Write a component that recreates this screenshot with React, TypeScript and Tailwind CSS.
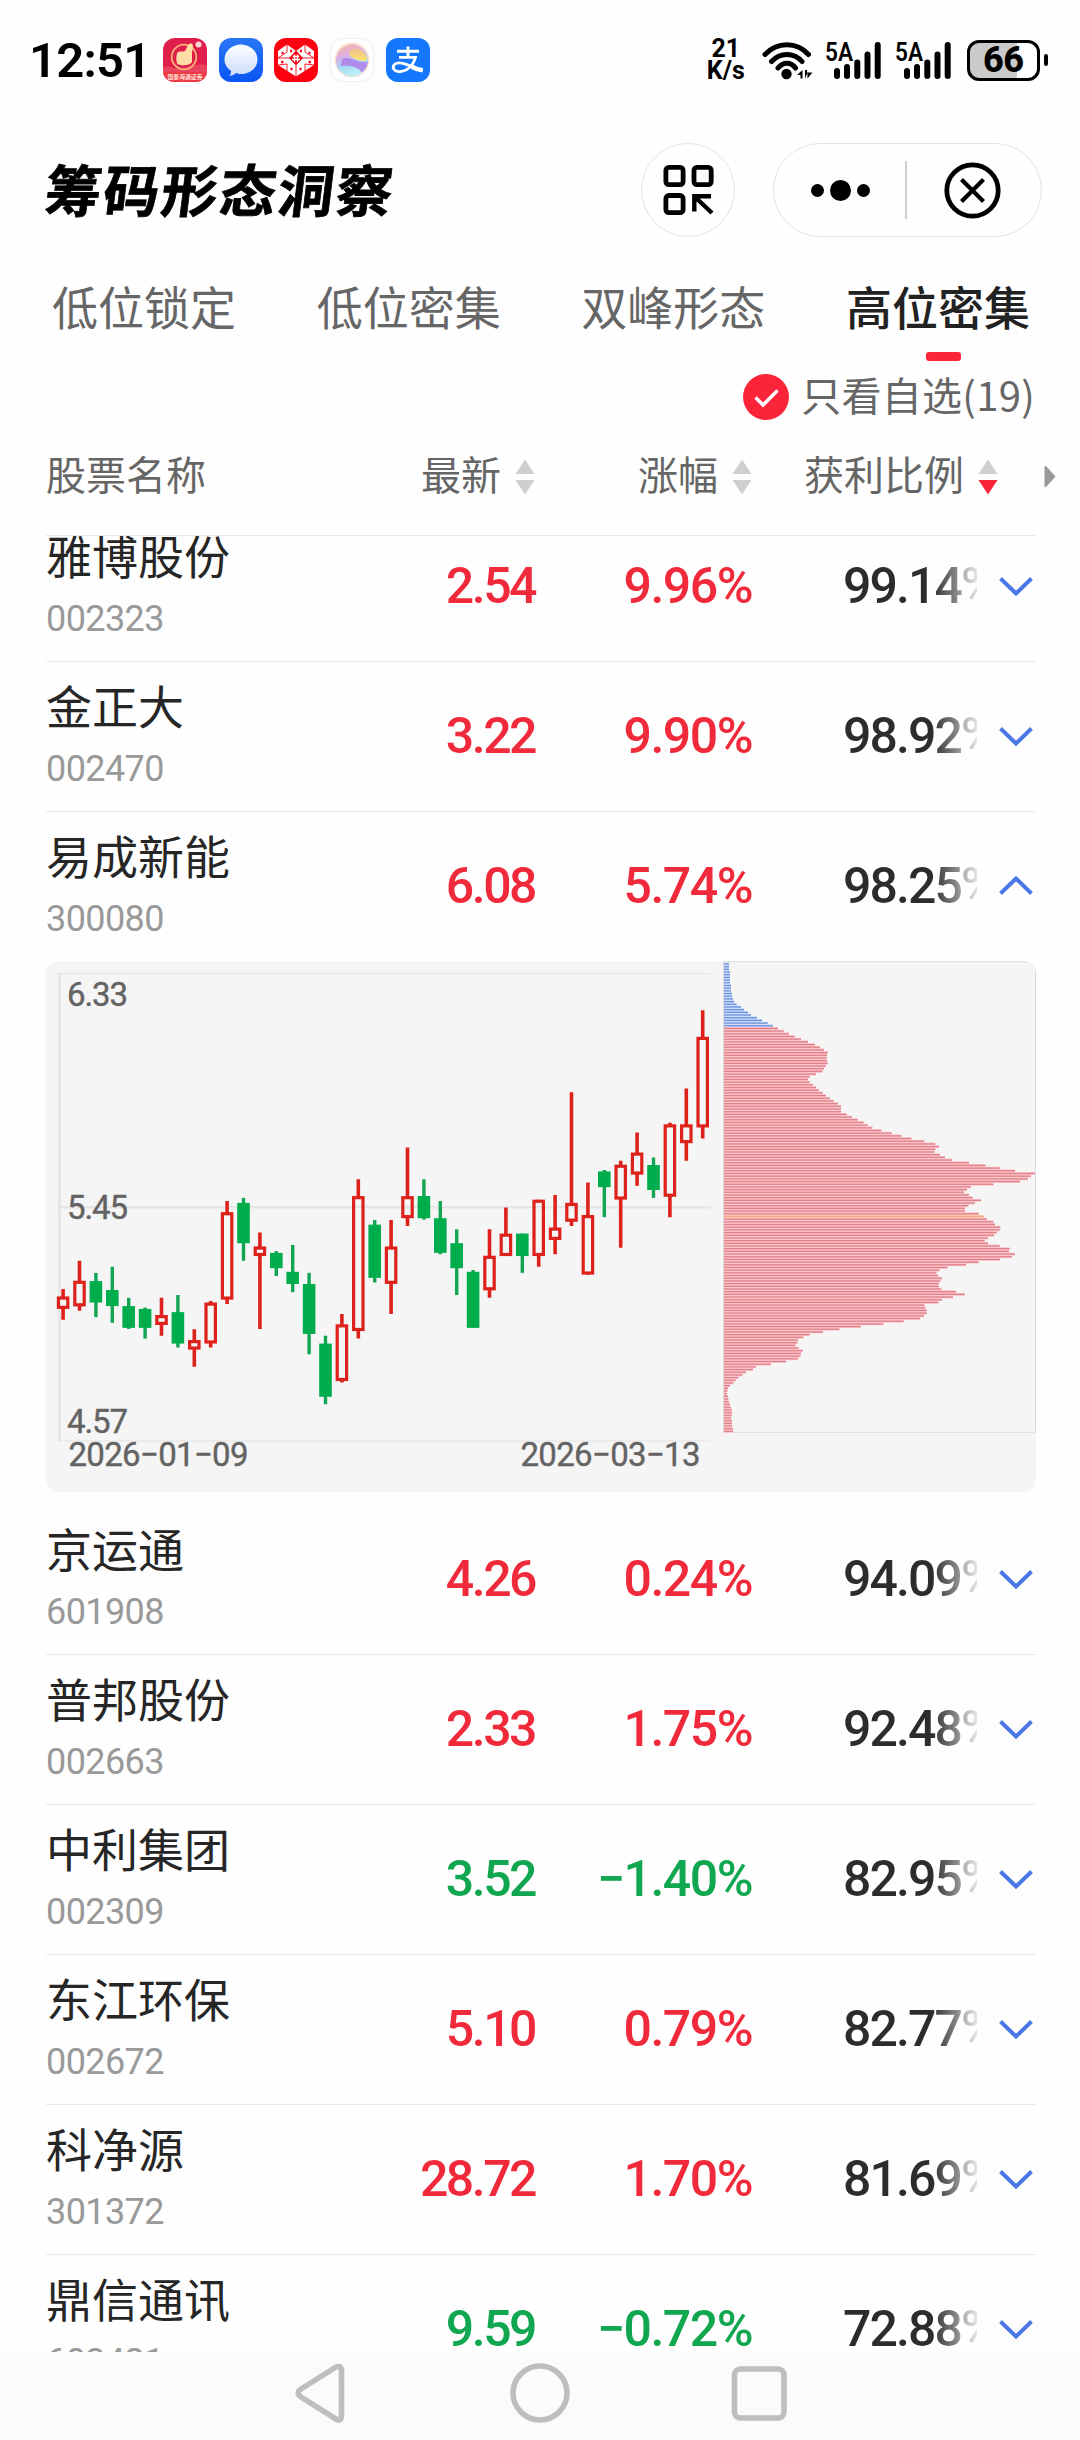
import React from 'react';

const CJK = "font-['Noto_Sans_CJK_SC',sans-serif]";
const NUM = "font-['Roboto','Noto_Sans_CJK_SC',sans-serif]";

type Stock = { name: string; code: string; price: string; change: string; ratio: string; open?: boolean };

const STOCKS: Stock[] = [
  { name: '雅博股份', code: '002323', price: '2.54', change: '9.96%', ratio: '99.14%' },
  { name: '金正大', code: '002470', price: '3.22', change: '9.90%', ratio: '98.92%' },
  { name: '易成新能', code: '300080', price: '6.08', change: '5.74%', ratio: '98.25%', open: true },
  { name: '京运通', code: '601908', price: '4.26', change: '0.24%', ratio: '94.09%' },
  { name: '普邦股份', code: '002663', price: '2.33', change: '1.75%', ratio: '92.48%' },
  { name: '中利集团', code: '002309', price: '3.52', change: '−1.40%', ratio: '82.95%' },
  { name: '东江环保', code: '002672', price: '5.10', change: '0.79%', ratio: '82.77%' },
  { name: '科净源', code: '301372', price: '28.72', change: '1.70%', ratio: '81.69%' },
  { name: '鼎信通讯', code: '603421', price: '9.59', change: '−0.72%', ratio: '72.88%' },
];

// [up?, high, body top, body bottom, low] in chart units, 2.8 units per pixel
const CANDLES: [number, number, number, number, number][] = [
  [1, 977, 998, 1033, 1063], [1, 898, 954, 1026, 1038], [0, 932, 955, 1015, 1056], [0, 915, 980, 1025, 1072],
  [0, 1002, 1025, 1086, 1089], [0, 1029, 1033, 1086, 1116], [1, 1002, 1050, 1078, 1108], [0, 994, 1042, 1130, 1141],
  [1, 1090, 1120, 1147, 1195], [1, 1011, 1015, 1130, 1141], [1, 731, 762, 1007, 1019], [0, 722, 736, 849, 898],
  [1, 819, 858, 885, 1089], [0, 871, 876, 919, 941], [0, 854, 929, 963, 986], [0, 932, 963, 1103, 1160],
  [0, 1108, 1130, 1279, 1300], [1, 1047, 1076, 1235, 1239], [1, 670, 717, 1095, 1116], [0, 784, 797, 946, 959],
  [1, 784, 858, 963, 1047], [1, 581, 717, 779, 801], [0, 670, 717, 779, 783], [0, 731, 779, 876, 880],
  [0, 810, 849, 919, 994], [0, 924, 929, 1086, 1086], [1, 810, 884, 981, 1002], [1, 749, 822, 885, 885],
  [0, 822, 822, 885, 932], [1, 727, 727, 885, 915], [1, 714, 805, 840, 880], [1, 426, 736, 789, 801],
  [1, 679, 770, 937, 937], [0, 644, 648, 692, 776], [1, 618, 629, 727, 862], [1, 539, 595, 657, 688],
  [0, 609, 630, 700, 722], [1, 512, 516, 719, 776], [1, 416, 516, 569, 618], [1, 197, 271, 525, 556],
];

// Chip volume at each price level, highest price first; 3 units per pixel, zero at 42
const CHIPS = [
  57, 57, 57, 60, 60, 60, 60, 60, 63, 63, 63, 66, 66, 69, 72, 80, 93, 102, 114, 123, 141, 156, 173, 189,
  204, 221, 237, 254, 273, 294, 315, 330, 342, 353, 351, 350, 351, 353, 347, 342, 337, 318, 299, 294, 299, 309, 318,
  327, 338, 348, 359, 371, 384, 393, 393, 393, 410, 426, 443, 461, 473, 487, 514, 545, 574, 604, 643, 676, 687, 676,
  673, 690, 705, 726, 777, 826, 869, 915, 975, 963, 954, 930, 850, 783, 771, 762, 777, 788, 813, 795, 775, 765, 765,
  806, 821, 831, 850, 855, 871, 869, 860, 852, 834, 824, 834, 869, 899, 897, 915, 906, 870, 806, 768, 712, 688, 679,
  684, 696, 691, 686, 686, 694, 738, 764, 729, 696, 685, 643, 646, 650, 650, 642, 630, 581, 520, 452, 388, 339, 299,
  280, 264, 262, 256, 266, 278, 273, 271, 264, 228, 183, 138, 129, 108, 97, 85, 77, 70, 60, 54, 52, 51, 54, 55, 57,
  60, 62, 65, 66, 65, 63, 66, 66, 66, 69, 69,
];
const PROFIT_LEVEL = 24;
const COST_LEVEL = 94;

function ChipChart() {
  const y = (v: number) => v / 2.8 - 21;
  return (
    <svg className="block h-[531px] w-[990px] rounded-[12px] bg-[#f5f5f5]" viewBox="0 0 990 531">
      <rect x="12" y="12" width="653" height="1" fill="#e4e4e4" />
      <rect x="12" y="245" width="653" height="2.5" fill="#e6e6e6" />
      <rect x="12" y="479.5" width="653" height="1" fill="#e4e4e4" />
      <rect x="12" y="12" width="3" height="468" fill="#e6e6e6" />
      {CANDLES.map(([up, high, top, bottom, low], i) => {
        const cx = 17.1 + i * 16.4;
        return up ? (
          <g key={i} fill="none" stroke="#dd221c" strokeWidth="3.2">
            <path d={`M${cx} ${y(high)}V${y(top) + 1}M${cx} ${y(bottom) - 1}V${y(low)}`} strokeWidth="3.6" />
            <rect x={cx - 4.7} y={y(top) + 1.6} width="9.4" height={y(bottom) - y(top) - 3.2} />
          </g>
        ) : (
          <g key={i} fill="#00ad4c">
            <rect x={cx - 1.7} y={y(high)} width="3.4" height={y(low) - y(high)} fill="#13a454" />
            <rect x={cx - 6.3} y={y(top)} width="12.6" height={y(bottom) - y(top)} />
          </g>
        );
      })}
      <rect x="677.5" y="0.8" width="312" height="470.5" fill="none" stroke="#dedede" />
      {CHIPS.map((v, i) => {
        const profit = i < PROFIT_LEVEL;
        const cost = i === COST_LEVEL;
        const cy = 3 + i * 2.6857;
        const w = (v - 42) / 3;
        return (
          <g key={i}>
            <rect x="678" y={cy - 1.35} width={w} height="2.7" fill={profit ? '#c3d6fb' : cost ? '#ffc9a6' : '#fdbcc1'} />
            <rect x="678" y={cy - 0.6} width={w} height="1.2" fill={profit ? '#6b8fdb' : cost ? '#f7a886' : '#dd808a'} />
          </g>
        );
      })}
      <g fill="#636363" stroke="#636363" strokeWidth="0.4" fontFamily="Roboto, sans-serif" fontSize="33">
        <text x="21" y="45" textLength="61">6.33</text>
        <text x="21" y="258" textLength="61">5.45</text>
        <text x="21" y="472" textLength="61">4.57</text>
        <text x="22.500" y="504.500" textLength="180">2026−01−09</text>
        <text x="474.500" y="504.500" textLength="180">2026−03−13</text>
      </g>
    </svg>
  );
}

function StockRow({ s }: { s: Stock }) {
  const tone = s.change.startsWith('−') ? 'text-[#11a650]' : 'text-[#f02a3a]';
  return (
    <div className="flex h-[150px] shrink-0">
      <div className="flex w-[250px] flex-col pt-[20px]">
        <div className={`h-[46px] text-[46px] leading-[46px] text-[#262626] ${CJK}`}>{s.name}</div>
        <div className={`mt-[24px] h-[36px] text-[36px] leading-[36px] tracking-[-0.6px] text-[#999] ${NUM}`}>{s.code}</div>
      </div>
      <div className={`flex h-[150px] items-center text-[50px] font-medium leading-none ${NUM}`}>
        <div className={`w-[239px] text-right tracking-[-2.5px] ${tone}`}>{s.price}</div>
        <div className={`w-[217px] text-right tracking-[-1.5px] ${tone}`}>{s.change}</div>
        <div className="ml-[91px] w-[134px] overflow-hidden whitespace-nowrap bg-[linear-gradient(90deg,#2c2c2c_66%,#888888_85%,#bbbbbb_92%,#e4e4e4_100%)] bg-clip-text tracking-[-1.9px] text-transparent">
          {s.ratio}
        </div>
        <svg className="ml-[21px] h-[24px] w-[36px]" viewBox="0 0 36 24" fill="none" stroke="#4b77e6" strokeWidth="4">
          <path d={s.open ? 'M2.500 19.500 18 4.500 33.500 19.500' : 'M2.500 4.500 18 19.500 33.500 4.500'} />
        </svg>
      </div>
    </div>
  );
}

function Sorter({ down }: { down?: boolean }) {
  return (
    <svg className="mt-[7px] h-[36px] w-[20px]" viewBox="0 0 20 36">
      <path d="M10 0.500 19.500 15H0.500Z" fill="#cfcfcf" />
      <path d="M10 35.500 19.500 21H0.500Z" fill={down ? '#f9263a' : '#cfcfcf'} />
    </svg>
  );
}

function Signal() {
  return (
    <svg className="h-[40px] w-[56px] overflow-visible" viewBox="0 0 56 40">
      <text x="0" y="20.500" fontFamily="Roboto, sans-serif" fontSize="26" fontWeight="600" textLength="28" lengthAdjust="spacingAndGlyphs">5A</text>
      <g stroke="#000" strokeWidth="6" strokeLinecap="round">
        <path d="M12 31V36M22 27V36M32.300 22.500V36M42.500 14.500V36M52.700 5V36" />
      </g>
    </svg>
  );
}

function StatusBar() {
  return (
    <div className="flex h-[120px] items-center">
      <div className={`ml-[29px] w-[134px] text-[49px] font-semibold leading-none tracking-[-0.8px] text-black ${NUM}`}>12:51</div>
      <div className="flex gap-[11.700px]">
        <svg className="size-[44px]" viewBox="0 0 44 44">
          <rect width="44" height="44" rx="12" fill="#e01e4b" />
          <path d="M0 30C6 26 10 32 15 29C22 33 36 22 44 28V34H0Z" fill="#e9435f" />
          <path d="M0 34H44C43.500 40 39 44 32 44H12C5 44 0.500 40 0 34Z" fill="#ee3a44" />
          <circle cx="21" cy="19" r="12.300" fill="none" stroke="#f6b07a" strokeWidth="1.800" />
          <path d="M22 13C24 10 25 5 28 5.500C31 6 30 10 29 14V24C27 28 18 28 14.500 26C13 24 13 17 14.500 14.500C17 12.500 20 14.500 22 13Z" fill="#ffdca5" />
          <circle cx="35.500" cy="6.500" r="3" fill="#ffd9d0" />
          <text x="4.500" y="41" fontSize="6" fontWeight="700" fill="#ffe0d8" fontFamily="Noto Sans CJK SC" textLength="35" lengthAdjust="spacingAndGlyphs">国泰海通证券</text>
        </svg>
        <svg className="size-[44px]" viewBox="0 0 44 44">
          <defs>
            <linearGradient id="msg" x2="0" y2="1"><stop stopColor="#2a76f6" /><stop offset="1" stopColor="#0a56f4" /></linearGradient>
            <linearGradient id="bub" x2="0" y2="1"><stop stopColor="#fff" /><stop offset="1" stopColor="#cbdcfc" /></linearGradient>
          </defs>
          <rect width="44" height="44" rx="12" fill="url(#msg)" />
          <path d="M22 6.500C13 6.500 5.500 13 5.500 21.500C5.500 26 8 30 12 32.700C12 34.500 11.500 36.500 10.500 38C13.500 37.500 15.500 36.500 17 35C18.500 35.500 20 36 22 36C31 36 38.500 30 38.500 21.500C38.500 13 31 6.500 22 6.500Z" fill="url(#bub)" />
        </svg>
        <svg className="size-[44px]" viewBox="0 0 44 44">
          <rect width="44" height="44" rx="12" fill="#fc0010" />
          <path d="M13 6.500 22 13 31 6.500 40 13V27L22 38.500 4 27V13Z" fill="#fff" />
          <g fill="none" stroke="#fc0010">
            <path d="M4 20H16M28 20H40M13 6V14M31 6V14M13 14 4 20M31 14 40 20M13 26V33M31 26V33M22 27V38M4 27 13 26M40 27 31 26" strokeWidth="0.900" />
            <path d="M7.500 15H9.500M34.500 15H36.500M7 24H9.500M34.500 24H37M16 13H18M26 13H28M16.500 31H18.500M25.500 31H27.500" strokeWidth="2.400" />
          </g>
          <path d="M22 13.500 28 20 22 26.500 16 20Z" fill="#fc0010" stroke="#fc0010" strokeWidth="1.500" />
          <path d="M18.800 18.500H25.200M18 21.500H26M20.500 16.500V24M23.500 16.500V24" stroke="#fff" strokeWidth="1.300" />
        </svg>
        <svg className="size-[44px]" viewBox="0 0 44 44">
          <defs>
            <linearGradient id="orb" x2="0.300" y2="1">
              <stop stopColor="#f6b894" /><stop offset=".4" stopColor="#dcaee6" /><stop offset=".7" stopColor="#a3d9f4" /><stop offset="1" stopColor="#b9f0f5" />
            </linearGradient>
            <linearGradient id="sun" x2="0" y2="1"><stop stopColor="#f3bf94" /><stop offset="1" stopColor="#fae36c" /></linearGradient>
          </defs>
          <rect x=".5" y=".5" width="43" height="43" rx="12" fill="#fff" stroke="#ededed" />
          <circle cx="22" cy="22" r="17.500" fill="#fbe3d4" />
          <circle cx="22" cy="22.500" r="16" fill="url(#orb)" />
          <path d="M20 13C24 8 33 10 37 19C38 25 30 23 26 21C21 19 18 17 20 13Z" fill="url(#sun)" />
          <path d="M14 20C22 19 29 26 38 23.500C37 29 35 32 32 34.500C28 29 20 27 11 28C11 24 12 21 14 20Z" fill="#b07eea" opacity=".85" />
        </svg>
        <svg className="size-[44px]" viewBox="0 0 44 44">
          <rect width="44" height="44" rx="12" fill="#1577fe" />
          <g fill="none" stroke="#fff">
            <path d="M11 13.200H33M22 8.500V19" strokeWidth="3" />
            <path d="M13 19.300H29.500C28 25 23 33 14.500 33.500C7 34 6 29 8.500 26.500C12 23.500 19 25.500 26 29C30 31 34 32 37 32" strokeWidth="2.800" />
            <path d="M26 28.700C30 31 34 32 36.500 32.300" strokeWidth="4.500" />
          </g>
        </svg>
      </div>
      <div className={`ml-[273px] w-[46px] text-center text-[25px] font-bold leading-[22px] text-black ${NUM}`}>
        <div>21</div>
        <div>K/s</div>
      </div>
      <svg className="ml-[13px] h-[40px] w-[52px]" viewBox="0 0 52 40">
        <g fill="none" stroke="#000" strokeWidth="5" strokeLinecap="round">
          <path d="M3 14.500C15 1.500 35 1.500 46.500 14.500M9.500 21.500C18 12 32 12 40 21.500M16 28C21 21.500 29 21.500 33.500 28" />
        </g>
        <circle cx="24.500" cy="34" r="5.200" />
        <path d="M40.500 30V38.500H38.500V35H35ZM43 30V38.500L45.500 33V38.500L50.500 32.500H45V30Z" />
      </svg>
      <div className="ml-[11px] flex gap-[14px]">
        <Signal />
        <Signal />
      </div>
      <div className="ml-[16px] flex items-center gap-[4px]">
        <div className={`flex h-[41px] w-[73px] items-center justify-center rounded-[12px] border-[3.500px] border-black bg-[linear-gradient(90deg,#cacaca_70%,#fff_70%)] text-[36px] font-extrabold leading-none tracking-[-0.5px] text-black ${NUM}`}>66</div>
        <div className="h-[12px] w-[4px] rounded-[2px] bg-black" />
      </div>
    </div>
  );
}

function TitleBar() {
  return (
    <div className="flex h-[140px] items-center">
      <div className={`-mt-[5px] ml-[46px] w-[595px] origin-center -skew-x-[7deg] whitespace-nowrap text-[56px] font-bold leading-none tracking-[2.200px] text-black [-webkit-text-stroke:0.8px_#000] ${CJK}`}>
        筹码形态洞察
      </div>
      <div className="flex size-[94px] items-center justify-center rounded-full border-[1.500px] border-[#e3e3e3]">
        <svg className="size-[52px]" viewBox="0 0 52 52" fill="none" stroke="#000" strokeWidth="4.800">
          <rect x="3.900" y="3.400" width="17.200" height="17.200" rx="3" />
          <rect x="32" y="3.400" width="17.200" height="17.200" rx="3" />
          <rect x="3.900" y="31.500" width="17.200" height="17.200" rx="3" />
          <path d="M32.300 47.500V32.200H49M33 33 50 49" strokeWidth="4.400" />
        </svg>
      </div>
      <div className="ml-[38px] flex h-[94px] w-[269px] items-center rounded-full border-[1.500px] border-[#e3e3e3]">
        <div className="ml-[37px] flex w-[59px] items-center justify-between">
          <div className="size-[13px] rounded-full bg-black" />
          <div className="size-[21px] rounded-full bg-black" />
          <div className="size-[13px] rounded-full bg-black" />
        </div>
        <div className="ml-[35px] h-[58px] w-[1.500px] bg-[#cfcfcf]" />
        <svg className="ml-[37px] size-[57px]" viewBox="0 0 57 57" fill="none" stroke="#000">
          <circle cx="28.500" cy="28.500" r="25.700" strokeWidth="4.800" />
          <path d="M17.500 17.500 39.500 39.500M39.500 17.500 17.500 39.500" strokeWidth="4.200" />
        </svg>
      </div>
    </div>
  );
}

export default function App() {
  return (
    <div className="flex h-[2440px] w-[1080px] flex-col overflow-hidden bg-[#fefefe]">
      <StatusBar />
      <TitleBar />
      <div className={`flex h-[110px] shrink-0 justify-between pl-[52px] pr-[50px] text-[46px] leading-[46px] text-[#666] ${CJK}`}>
        <div className="w-[184px] whitespace-nowrap pt-[22px]">低位锁定</div>
        <div className="w-[184px] whitespace-nowrap pt-[22px]">低位密集</div>
        <div className="w-[184px] whitespace-nowrap pt-[22px]">双峰形态</div>
        <div className="flex w-[184px] flex-col items-center whitespace-nowrap pt-[22px] font-medium text-[#222]">
          高位密集
          <div className="ml-[12px] mt-[24px] h-[9px] w-[35px] rounded-[3px] bg-[#fc2438]" />
        </div>
      </div>
      <div className={`flex h-[54px] shrink-0 items-center justify-end pr-[45px] text-[40px] leading-none text-[#666] ${CJK}`}>
        <svg className="mr-[12px] size-[46px]" viewBox="0 0 46 46">
          <circle cx="23" cy="23" r="23" fill="#fc2438" />
          <path d="M12.500 23.500 20 31 34.500 16.500" fill="none" stroke="#fff" strokeWidth="3.400" />
        </svg>
        <span className="-mt-[7px] tracking-[0.3px]">只看自选(19)</span>
      </div>
      <div className={`ml-[46px] flex h-[111px] w-[1034px] shrink-0 items-center pb-[13px] text-[40px] leading-none text-[#666] ${CJK}`}>
        <div className="w-[375px]">股票名称</div>
        <div className="flex w-[217px] items-center gap-[14px]">最新<Sorter /></div>
        <div className="flex w-[166px] items-center gap-[14px]">涨幅<Sorter /></div>
        <div className="flex w-[240px] items-center gap-[14px]">获利比例<Sorter down /></div>
        <svg className="mt-[7px] h-[21px] w-[12px]" viewBox="0 0 12 21"><path d="M0.500 0H2L11.500 10.500 2 21H0.500Z" fill="#999" /></svg>
      </div>
      <div className="ml-[46px] mr-[44px] flex h-[1817px] shrink-0 flex-col overflow-hidden border-t border-[#e9e9e9]">
        <div className="-mt-[25px] flex flex-col">
          {STOCKS.map((s, i) => (
            <React.Fragment key={s.code}>
              <StockRow s={s} />
              {s.open ? (
                <div className="mb-[12px] h-[531px]"><ChipChart /></div>
              ) : i < STOCKS.length - 1 ? (
                <div className="-mb-px h-px shrink-0 bg-[#e9e9e9]" />
              ) : null}
            </React.Fragment>
          ))}
        </div>
      </div>
      <div className="flex h-[88px] shrink-0 bg-[#fbfbfb] pl-[292px] pt-[10px]">
        <svg className="h-[62px] w-[500px]" viewBox="0 0 500 62" fill="none" stroke="#bebebe" strokeWidth="5.600" strokeLinejoin="round">
          <path d="M44 5Q49 3 49.500 8V54Q49 60 44 57L9 35Q3.500 31 9 27Z" />
          <circle cx="248" cy="31" r="27" />
          <rect x="442.500" y="7" width="49.500" height="49" rx="6" />
        </svg>
      </div>
    </div>
  );
}
